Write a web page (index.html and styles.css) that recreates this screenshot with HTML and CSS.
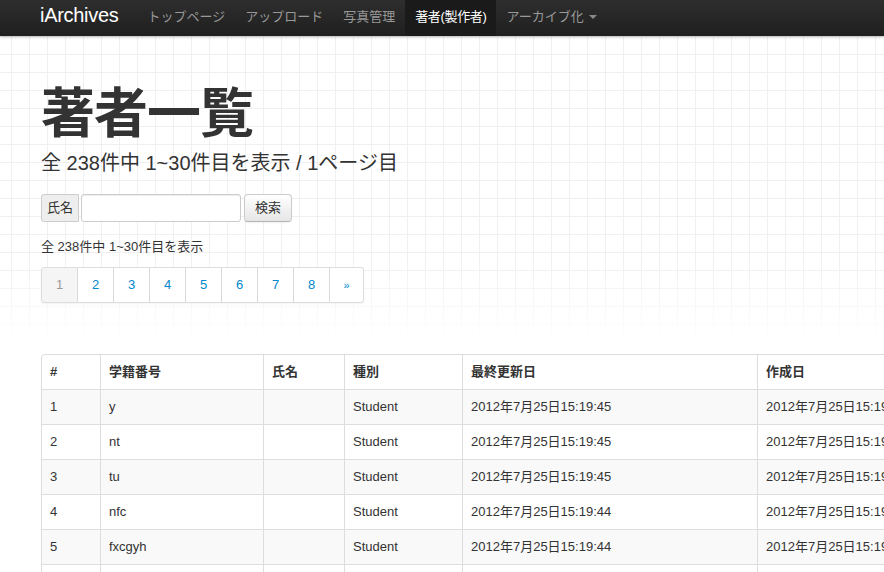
FILE: index.html
```html
<!DOCTYPE html>
<html lang="ja">
<head>
<meta charset="utf-8">
<title>iArchives - 著者一覧</title>
<link rel="stylesheet" href="styles.css">
</head>
<body>
<header class="navbar">
  <div class="navbar-inner">
    <a class="brand" href="#">iArchives</a>
    <ul class="nav">
      <li><a href="#">トップページ</a></li>
      <li><a href="#">アップロード</a></li>
      <li><a href="#">写真管理</a></li>
      <li class="active"><a href="#">著者(製作者)</a></li>
      <li><a href="#">アーカイブ化 <span class="caret"></span></a></li>
    </ul>
  </div>
</header>

<section class="subhead">
  <div class="container">
    <h1>著者一覧</h1>
    <p class="lead">全 238件中 1~30件目を表示 / 1ページ目</p>
    <form class="search-form">
      <span class="add-on">氏名</span>
      <input class="search-input" type="text">
      <button class="btn" type="button">検索</button>
    </form>
    <p class="info">全 238件中 1~30件目を表示</p>
    <ul class="pagination">
      <li class="active"><a href="#">1</a></li>
      <li><a href="#">2</a></li>
      <li><a href="#">3</a></li>
      <li><a href="#">4</a></li>
      <li><a href="#">5</a></li>
      <li><a href="#">6</a></li>
      <li><a href="#">7</a></li>
      <li><a href="#">8</a></li>
      <li class="next"><a href="#">»</a></li>
    </ul>
  </div>
</section>

<main class="container table-wrap">
  <table class="table">
    <thead>
      <tr>
        <th class="c-num">#</th>
        <th class="c-id">学籍番号</th>
        <th class="c-name">氏名</th>
        <th class="c-kind">種別</th>
        <th class="c-upd">最終更新日</th>
        <th class="c-cre">作成日</th>
      </tr>
    </thead>
    <tbody>
      <tr><td>1</td><td>y</td><td></td><td>Student</td><td>2012年7月25日15:19:45</td><td>2012年7月25日15:19:45</td></tr>
      <tr><td>2</td><td>nt</td><td></td><td>Student</td><td>2012年7月25日15:19:45</td><td>2012年7月25日15:19:45</td></tr>
      <tr><td>3</td><td>tu</td><td></td><td>Student</td><td>2012年7月25日15:19:45</td><td>2012年7月25日15:19:45</td></tr>
      <tr><td>4</td><td>nfc</td><td></td><td>Student</td><td>2012年7月25日15:19:44</td><td>2012年7月25日15:19:44</td></tr>
      <tr><td>5</td><td>fxcgyh</td><td></td><td>Student</td><td>2012年7月25日15:19:44</td><td>2012年7月25日15:19:44</td></tr>
      <tr><td>6</td><td>ab</td><td></td><td>Student</td><td>2012年7月25日15:19:44</td><td>2012年7月25日15:19:44</td></tr>
    </tbody>
  </table>
</main>
</body>
</html>
```

FILE: styles.css
```css
html {
  overflow: hidden;
}
body {
  margin: 0;
  font-family: "Liberation Sans", "Noto Sans CJK JP", sans-serif;
  font-size: 13px;
  line-height: 18px;
  color: #333;
  background: #fff;
}
a {
  text-decoration: none;
}

/* navbar */
.navbar {
  height: 36px;
  background: linear-gradient(to bottom, #2e2e2e, #1f1f1f);
  box-shadow: 0 1px 3px rgba(0, 0, 0, 0.25);
  position: relative;
  z-index: 2;
}
.navbar-inner {
  display: flex;
  align-items: flex-start;
  padding-left: 40px;
  height: 36px;
}
.brand {
  display: block;
  font-size: 20px;
  line-height: 20px;
  padding: 5px 20px 11px 0;
  color: #fff;
  letter-spacing: -0.3px;
}
.nav {
  display: flex;
  list-style: none;
  margin: 0 0 0 -1px;
  padding: 0;
  height: 36px;
}
.nav a {
  display: block;
  padding: 8px 10px 10px;
  line-height: 18px;
  color: #999;
  font-size: 13px;
}
.nav .active a {
  color: #fff;
  background: #1a1a1a;
  letter-spacing: -0.35px;
}
.caret {
  display: inline-block;
  width: 0;
  height: 0;
  border-top: 4px solid #888;
  border-left: 4px solid transparent;
  border-right: 4px solid transparent;
  vertical-align: middle;
  margin-left: 2px;
  margin-top: -2px;
}

/* subhead with grid */
.subhead {
  padding: 48px 0 51px;
  background-color: #fff;
  background-image:
    linear-gradient(to bottom, rgba(255, 255, 255, 0) 225px, #fff 305px),
    linear-gradient(to right, #f0f0f0 1px, transparent 1px),
    linear-gradient(to bottom, #f0f0f0 1px, transparent 1px);
  background-size: 100% 100%, 18px 18px, 18px 18px;
  background-position: 0 0, 11px 0, 0 0;
  background-repeat: no-repeat, repeat, repeat;
}
.container {
  margin-left: 41px;
  width: 941px;
}
h1 {
  margin: 0;
  font-size: 54px;
  line-height: 60px;
  font-weight: bold;
  letter-spacing: -1px;
  color: #333;
}
.lead {
  margin: 5px 0 0;
  font-size: 20px;
  line-height: 28px;
  font-weight: normal;
}

/* search form */
.search-form {
  display: flex;
  align-items: flex-start;
  margin-top: 17px;
  height: 28px;
}
.add-on {
  display: block;
  box-sizing: border-box;
  height: 28px;
  padding: 4px 5px;
  line-height: 18px;
  background: #eee;
  border: 1px solid #ccc;
  border-radius: 3px 0 0 3px;
  font-size: 13px;
  color: #333;
}
.search-input {
  box-sizing: border-box;
  width: 160px;
  height: 28px;
  margin: 0 0 0 2px;
  padding: 4px;
  border: 1px solid #ccc;
  border-radius: 3px;
  box-shadow: inset 0 1px 1px rgba(0, 0, 0, 0.075);
  background: #fff;
  font: inherit;
}
.btn {
  box-sizing: border-box;
  height: 28px;
  margin: 0 0 0 3px;
  padding: 4px 10px;
  line-height: 18px;
  font-family: inherit;
  font-size: 13px;
  color: #333;
  background: linear-gradient(to bottom, #fff, #e6e6e6);
  border: 1px solid #ccc;
  border-bottom-color: #b3b3b3;
  border-radius: 4px;
  box-shadow: inset 0 1px 0 rgba(255, 255, 255, 0.2), 0 1px 2px rgba(0, 0, 0, 0.05);
}

.info {
  margin: 16px 0 0;
  font-size: 13px;
  line-height: 18px;
}

/* pagination */
.pagination {
  display: flex;
  list-style: none;
  margin: 11px 0 0;
  padding: 0;
  height: 36px;
}
.pagination li {
  display: block;
}
.pagination a {
  display: block;
  width: 35px;
  text-align: center;
  line-height: 34px;
  border: 1px solid #ddd;
  border-left-width: 0;
  color: #0088cc;
  font-size: 13px;
  box-shadow: 0 1px 2px rgba(0, 0, 0, 0.05);
  background: #fff;
}
.pagination li:first-child a {
  border-left-width: 1px;
  border-radius: 3px 0 0 3px;
}
.pagination .active a {
  background: #f5f5f5;
  color: #999;
}
.pagination .next a {
  width: 33px;
  border-radius: 0 3px 3px 0;
  font-size: 11px;
}

/* table */
.table {
  width: 941px;
  table-layout: fixed;
  border-collapse: separate;
  border-spacing: 0;
  border: 1px solid #ddd;
  border-radius: 4px;
  font-size: 13px;
}
.table th,
.table td {
  box-sizing: border-box;
  padding: 8px;
  line-height: 18px;
  text-align: left;
  vertical-align: top;
  border-left: 1px solid #ddd;
  border-top: 1px solid #ddd;
  white-space: nowrap;
  overflow: hidden;
}
.table th:first-child,
.table td:first-child {
  border-left: 0;
}
.table thead th {
  border-top: 0;
  font-weight: bold;
}
.table tbody tr:nth-child(odd) td {
  background: #f9f9f9;
}
.c-num { width: 58px; }
.c-id { width: 163px; }
.c-name { width: 81px; }
.c-kind { width: 118px; }
.c-upd { width: 295px; }
.c-cre { width: 224px; }
```
